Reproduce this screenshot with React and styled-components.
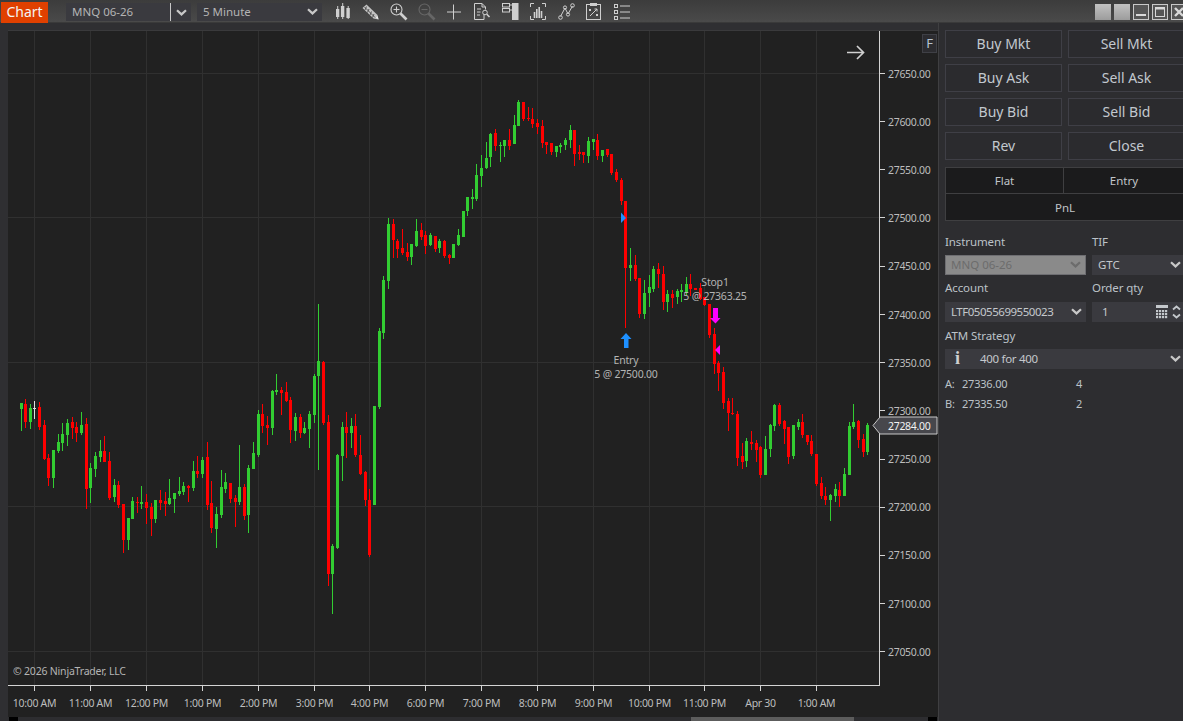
import React from "react";
import styled, { createGlobalStyle } from "styled-components";

const UI = '"Noto Sans", "Open Sans", "Liberation Sans", sans-serif';

const Global = createGlobalStyle`
  html, body { margin: 0; padding: 0; background: #2d2d30; }
  #root { width: 1183px; height: 721px; overflow: hidden; }
  * { box-sizing: border-box; }
`;

/* ---------- candle data: crops of the chart, [x, wickTop, bodyTop, bodyBottom, wickBottom, colour] at 3x ---------- */
const crops = [
  { ox: 0, oy: 390, bars: `64 39 39 57 123 g;76 27 42 96 114 r;91 42 54 96 117 g;103 33 54 57 87 w;118 36 51 111 120 r;133 90 105 207 210 r;145 192 204 264 288 r;160 180 180 264 294 g;175 132 156 184 189 g;187 99 132 159 184 g;202 87 99 135 168 g;217 81 96 114 148 r;229 96 111 129 156 r;244 66 105 129 135 g;259 84 102 297 357 r;271 219 234 294 339 g;286 186 198 237 261 g;301 150 183 201 216 g;313 138 183 216 216 r;328 186 213 324 330 r;343 267 285 321 336 g;355 273 285 345 354 r;370 342 342 450 489 r;385 384 384 450 480 g;397 321 333 387 387 g;412 321 336 339 369 r;424 288 336 342 357 g;439 312 336 354 402 r;454 339 351 387 438 r;466 330 330 387 399 g;481 300 330 339 360 r;496 306 333 342 378 r;508 267 324 342 345 g;523 309 309 327 369 g;538 261 303 312 318 g;550 276 288 306 315 g;565 285 288 294 336 r;580 213 243 294 303 g;592 198 243 252 264 r` },
  { ox: 200, oy: 300, bars: `7 471 480 522 534 g;22 426 471 615 630 r;34 543 609 684 699 r;49 621 642 687 744 g;64 510 561 645 654 g;76 519 546 567 579 g;91 549 549 597 609 r;106 585 594 606 681 r;118 435 561 606 615 g;133 552 561 648 660 r;145 495 504 645 699 g;160 426 459 507 507 g;175 330 342 465 471 g;187 312 342 378 399 r;202 348 375 384 435 r;217 270 273 384 405 g;229 222 270 276 285 g;244 261 270 279 345 r;259 246 276 303 306 r;271 291 300 390 429 r;286 339 351 393 423 g;301 342 351 399 414 r;313 366 384 399 402 g;328 333 342 387 444 g;343 222 228 345 369 g;355 12 183 228 510 g;370 183 186 369 375 r;385 345 366 822 858 r;397 732 738 822 942 g;412 462 465 744 747 g;427 366 381 468 543 g;439 336 381 399 474 r;454 354 378 399 444 g;466 342 378 465 471 r;481 405 465 522 525 r;496 513 516 600 618 r;508 567 600 765 771 r;523 318 318 615 615 g;538 84 93 321 327 g;550 -72 -60 99 117 g` },
  { ox: 380, oy: 95, bars: `25 369 387 558 582 g;40 372 387 435 489 r;52 432 438 462 489 r;67 402 459 474 480 r;82 444 471 486 498 r;94 447 447 486 510 g;109 372 408 453 456 g;124 384 405 426 435 r;136 408 420 453 477 r;151 414 420 450 453 g;166 423 423 462 471 r;178 432 438 459 474 g;193 435 438 483 489 r;208 477 480 489 507 r;220 447 447 489 489 g;235 402 420 450 453 g;250 348 348 426 426 g;262 306 306 348 363 g;277 282 306 312 342 g;289 207 240 312 318 g;304 180 219 243 276 g;319 141 189 219 222 g;331 114 117 186 216 g;346 102 114 153 168 r;361 141 150 153 201 g;373 135 135 153 186 g;388 102 135 153 165 r;403 60 90 147 147 g;415 15 21 93 93 g;430 21 21 72 78 r;445 36 69 72 78 r;457 39 72 87 99 r;472 72 84 96 117 r;487 75 93 144 159 r;499 141 141 150 177 r;514 144 144 171 180 r;529 153 153 171 186 g;541 144 150 156 174 g;556 129 135 150 165 g;571 90 105 135 159 g;583 105 105 177 213 r;598 150 171 177 195 r;610 171 171 180 204 r;625 126 138 183 204 g;640 132 132 141 165 g;652 117 135 183 195 r;667 165 165 183 201 g;682 162 162 180 186 r;694 177 177 234 240 r;709 222 231 255 261 r;724 249 255 318 330 r` },
  { ox: 580, oy: 200, bars: `136 3 3 204 384 r;151 144 195 204 243 g;166 165 195 237 243 r;178 234 234 342 354 r;193 240 279 342 357 g;208 225 261 279 321 g;220 198 207 267 276 g;235 189 207 222 264 r;250 198 222 306 330 r;262 270 282 306 336 g;277 270 282 294 324 r;292 267 273 291 312 g;304 252 270 276 306 g;319 231 252 276 285 g;331 222 252 267 288 r;346 264 264 270 270 r;361 249 264 297 300 r;373 291 291 315 318 r` },
  { ox: 690, oy: 300, bars: `58 12 12 105 114 r;73 84 102 192 222 r;85 183 189 219 273 r;100 201 216 309 327 r;115 294 303 339 393 r;127 294 339 342 345 r;142 333 342 474 498 r;157 429 468 486 507 r;169 414 423 483 501 g;184 393 426 432 450 r;199 420 429 450 486 r;211 438 441 525 534 r;226 408 447 525 525 g;241 372 375 447 471 g;253 312 315 378 393 g;268 309 315 372 378 r;283 360 363 387 432 r;295 381 381 471 492 r;310 375 375 468 477 g;325 357 366 381 390 g;337 342 366 405 414 r;352 405 405 426 435 r;364 405 423 462 468 r;379 462 462 552 558 r;394 531 549 588 597 r;406 561 588 600 615 r;421 582 585 600 663 g;436 552 567 588 606 g;448 546 570 588 621 r;463 504 522 588 588 g;478 366 378 525 525 g;490 312 366 381 387 g;505 360 363 420 444 r;520 402 417 456 471 r;532 369 375 456 465 g` },
];

const COLORS = { g: "#32cd32", r: "#ff0000", w: "#e0e0e0" };

const candles = crops.flatMap(({ ox, oy, bars }) =>
  bars.split(";").map((row) => {
    const p = row.split(" ");
    const [x, a, b, c, d] = p.slice(0, 5).map(Number);
    return {
      x: Math.floor(x / 3 + ox),
      high: Math.round(a / 3 + oy),
      top: Math.round(b / 3 + oy),
      bottom: Math.round(c / 3 + oy),
      low: Math.round(d / 3 + oy),
      color: COLORS[p[5]],
    };
  })
);

const priceLabels = [
  ["27650.00", 73.5], ["27600.00", 121.5], ["27550.00", 169.5], ["27500.00", 217.5],
  ["27450.00", 266], ["27400.00", 314.5], ["27350.00", 362.5], ["27300.00", 410.5],
  ["27250.00", 459], ["27200.00", 507], ["27150.00", 555], ["27100.00", 603.5], ["27050.00", 651.5],
];
const gridY = [73, 217, 362, 506, 651];
const timeLabels = [
  ["10:00 AM", 34], ["11:00 AM", 90], ["12:00 PM", 146], ["1:00 PM", 202], ["2:00 PM", 258],
  ["3:00 PM", 314], ["4:00 PM", 369], ["6:00 PM", 425], ["7:00 PM", 481], ["8:00 PM", 537],
  ["9:00 PM", 593], ["10:00 PM", 649], ["11:00 PM", 704], ["Apr 30", 760], ["1:00 AM", 816],
];

/* ---------- shell ---------- */
const Page = styled.div`
  width: 1183px;
  height: 721px;
  display: flex;
  flex-direction: column;
  overflow: hidden;
  background: #2d2d30;
  font-family: ${UI};
`;

const TitleBar = styled.header`
  height: 23px;
  flex: none;
  display: flex;
  align-items: flex-start;
  padding: 2px 0 0 1px;
  background: linear-gradient(#3c3c3c, #4a4a4a);
  border-bottom: 1px solid #3a3a3a;
`;

const ChartTab = styled.div`
  width: 47px;
  height: 21px;
  background: #e04000;
  color: #f4f4f4;
  font-size: 14px;
  line-height: 20px;
  text-align: center;
`;

const InstrumentBox = styled.div`
  width: 125px;
  height: 18px;
  margin: 1px 0 0 18px;
  display: flex;
  background: #3a3a3f;
  color: #b4b4b4;
  font-size: 11.5px;
  line-height: 17px;
`;

const InstrumentName = styled.span`
  width: 105px;
  padding-left: 6px;
  border-right: 1px solid #c8c8c8;
`;

const BoxChevron = styled.span`
  flex: 1;
  display: flex;
  align-items: center;
  justify-content: center;
`;

const IntervalBox = styled.div`
  width: 125px;
  height: 18px;
  margin: 1px 0 0 6px;
  padding: 0 4px 1px 6px;
  display: flex;
  align-items: center;
  justify-content: space-between;
  background: #3a3a3f;
  color: #b4b4b4;
  font-size: 11.5px;
`;

const IconRow = styled.div`
  display: flex;
  margin-left: 7px;
  margin-top: -2px;
`;

const ToolIcon = styled.span`
  width: 27.9px;
  height: 23px;
  display: flex;
  align-items: center;
  justify-content: center;
  color: ${(p) => (p.$dim ? "#666" : "#cfcfcf")};
`;

const WindowControls = styled.div`
  margin: 2px -4px 0 auto;
  display: flex;
  gap: 3px;
`;

const GhostControl = styled.span`
  width: 16px;
  height: 16px;
  background: linear-gradient(#c2c2c2, #9c9c9c);
`;

const WindowControl = styled.span`
  width: 16px;
  height: 16px;
  border: 1px solid #c8c8c8;
  background: #555;
  display: flex;
  align-items: center;
  justify-content: center;
  color: #d8d8d8;
`;

const Body = styled.main`
  flex: 1;
  display: flex;
  min-height: 0;
`;

/* ---------- chart ---------- */
const ChartColumn = styled.section`
  width: 938px;
  flex: none;
  padding: 7px 0 0 8px;
  display: flex;
  flex-direction: column;
  background: #2f2f32;
`;

const ChartFrame = styled.div`
  position: relative;
  width: 930px;
  height: 687px;
  background: #212121;
  border-top: 1px solid #3a3a3c;
`;

const ChartSvg = styled.svg`
  display: block;
  font-family: ${UI};
  font-size: 10.5px;
  letter-spacing: -0.3px;
  rect { shape-rendering: crispEdges; }
`;

const AxisText = styled.text`
  fill: #bdbdbd;
`;

const PlotNote = styled.text`
  fill: #b4b4b4;
  letter-spacing: -0.2px;
`;

const FlagButton = styled.div`
  position: absolute;
  top: 3px;
  right: 1px;
  width: 15px;
  height: 19px;
  border: 1px solid #3f4046;
  background: #2c2c30;
  color: #b8c4d0;
  font-size: 13px;
  line-height: 16px;
  text-align: center;
`;

const ScrollBar = styled.div`
  height: 4px;
  flex: none;
  display: flex;
  padding-left: 1px;
  background: #2d2d30;
`;

const ScrollCap = styled.span`
  width: 9px;
  background: #000;
  margin-left: ${(p) => p.$left || 0}px;
`;

const ScrollThumb = styled.span`
  width: 163px;
  margin-left: 673px;
  background: #5c5c5c;
`;

/* ---------- order panel ---------- */
const TradePanel = styled.aside`
  width: 247px;
  flex: none;
  padding: 7px 0 0 6px;
  background: #2d2d30;
  border-left: 1px solid #3f3f41;
`;

const ButtonGrid = styled.div`
  display: grid;
  grid-template-columns: 117px 117px;
  grid-auto-rows: 28px;
  gap: 6px;
`;

const OrderButton = styled.button`
  padding: 0 0 2px;
  border: 1px solid #3f3f46;
  background: #2b2b2e;
  color: #c2c8ce;
  font-family: inherit;
  font-size: 14px;
`;

const PositionTable = styled.div`
  margin-top: 7px;
  width: 240px;
  display: grid;
  grid-template-columns: 118px 120px;
  grid-auto-rows: 26px;
  background: #1b1b1c;
  border: 1px solid #3f3f41;
`;

const PositionCell = styled.div`
  display: flex;
  align-items: center;
  justify-content: center;
  color: #c0c4c8;
  font-size: 11.5px;
  grid-column: ${(p) => (p.$wide ? "1 / 3" : "auto")};
  border-right: ${(p) => (p.$split ? "1px solid #3f3f41" : "none")};
  border-bottom: ${(p) => (p.$split !== undefined ? "1px solid #3f3f41" : "none")};
`;

const FormGrid = styled.div`
  display: grid;
  grid-template-columns: 141px 93px;
  column-gap: 6px;
  padding-top: 8px;
`;

const FieldLabel = styled.label`
  display: block;
  height: 14px;
  line-height: 14px;
  margin: ${(p) => p.$top ?? 6}px 0 ${(p) => p.$bottom ?? 6}px;
  color: #bcc2c8;
  font-size: 11.5px;
  letter-spacing: -0.1px;
  grid-column: ${(p) => (p.$wide ? "1 / 3" : "auto")};
`;

const Select = styled.div`
  height: 20px;
  padding: 0 4px 1px ${(p) => (p.$disabled ? 5 : 6)}px;
  display: flex;
  align-items: center;
  justify-content: space-between;
  grid-column: ${(p) => (p.$wide ? "1 / 3" : "auto")};
  background: ${(p) => (p.$disabled ? "#8a8a8a" : "#3a3a3f")};
  border: ${(p) => (p.$disabled ? "1px solid #6e6e72" : "none")};
  color: ${(p) => (p.$disabled ? "#6c6c6c" : "#c4c8cc")};
  font-size: 11.5px;
`;

const AccountName = styled.span`
  letter-spacing: -0.47px;
`;

const QtyValue = styled.span`
  padding-left: 4px;
`;

const QtyTools = styled.span`
  display: flex;
  align-items: center;
  gap: 4px;
`;

const InfoGlyph = styled.span`
  width: 29px;
  padding-left: 4px;
  color: #d0d0d0;
  font-family: "Liberation Serif", serif;
  font-weight: 700;
  font-size: 18px;
`;

const StrategyName = styled.span`
  flex: 1;
  letter-spacing: -0.3px;
`;

const Quotes = styled.div`
  padding-top: 4px;
`;

const QuoteRow = styled.div`
  height: 20px;
  display: flex;
  align-items: center;
  color: #bcc2c8;
  font-size: 11px;
  letter-spacing: -0.2px;
`;

const QuoteSide = styled.span`
  width: 17px;
`;

const QuotePrice = styled.span`
  width: 114px;
`;

/* ---------- drawings ---------- */
const Chevron = ({ color = "#c8c8c8" }) => (
  <svg width="11" height="7" viewBox="0 0 11 7" fill="none">
    <path d="M1 1.2 L5.5 5.4 L10 1.2" stroke={color} strokeWidth="2.2" />
  </svg>
);

const CandlesIcon = () => (
  <svg width="14" height="17" viewBox="0 0 14 17" fill="currentColor">
    <rect x="1.2" y="3" width="1" height="13" /><rect x="0" y="6" width="3.3" height="8" />
    <rect x="6.2" y="0" width="1" height="16" /><rect x="4.9" y="3" width="3.4" height="11" />
    <rect x="11.7" y="3" width="1" height="13" /><rect x="10.4" y="5" width="3.4" height="10" />
  </svg>
);
const PencilIcon = () => (
  <svg width="17" height="16" viewBox="0 0 17 16">
    <path d="M0.5 4 L4.5 0.5 L15.5 11 L16.5 15.5 L11.5 14.5 Z" fill="#c4c4c4" />
    <path d="M4.5 2.5 L3 6 M7 5 L5.5 8.5 M9.5 7.5 L8 11 M12 10 L10.5 13.5 M2.5 3 L13 13.5" stroke="#4a4a4a" strokeWidth="0.9" fill="none" />
    <path d="M13.8 13.2 L16.5 15.5 L15.7 12.2 Z" fill="#efefef" />
  </svg>
);
const ZoomIcon = ({ minus, color }) => (
  <svg width="18" height="18" viewBox="0 0 18 18" fill="none" stroke={color}>
    <circle cx="6.5" cy="6.5" r="5.5" strokeWidth="1.1" />
    <path d="M3.5 6.5 H9.5" strokeWidth="1.1" />
    {!minus && <path d="M6.5 3.5 V9.5" strokeWidth="1.1" />}
    <path d="M10.5 10.5 L16.5 16.5" strokeWidth="2.6" />
  </svg>
);
const CrossIcon = () => (
  <svg width="16" height="16" viewBox="0 0 16 16" stroke="currentColor">
    <path d="M6.5 0.5 V15.5 M-1 8 H14" strokeWidth="1" />
  </svg>
);
const DocSearchIcon = () => (
  <svg width="17" height="17" viewBox="0 0 17 17" fill="none" stroke="currentColor">
    <path d="M10 11.5 V16.5 H0.5 V0.5 H8 L11.5 4 V6.5 M8 0.5 V4 H11.5" />
    <path d="M3 6 H7 M3 9 H6.5 M3 12 H6" />
    <circle cx="11" cy="9.5" r="2.3" />
    <path d="M12.8 11.3 L15.5 14" strokeWidth="1.6" />
  </svg>
);
const PanelsIcon = () => (
  <svg width="17" height="17" viewBox="0 0 17 17" fill="none" stroke="currentColor">
    <rect x="0.5" y="0.5" width="7" height="3.5" />
    <rect x="0.5" y="5.5" width="7" height="3.5" />
    <path d="M7.5 2 H10 M7.5 7 H10" />
    <rect x="10" y="0" width="6.5" height="17" fill="currentColor" stroke="none" />
  </svg>
);
const BracketBarsIcon = () => (
  <svg width="16" height="17" viewBox="0 0 16 17" fill="none" stroke="currentColor">
    <path d="M4 0.5 H0.5 V4 M12 0.5 H15.5 V4 M0.5 13 V16.5 H4 M15.5 13 V16.5 H12" />
    <path d="M4.5 15 V9 M6.8 15 V6 M9.2 15 V4 M11.5 15 V8" strokeWidth="1.6" />
  </svg>
);
const LinesIcon = () => (
  <svg width="17" height="17" viewBox="0 0 17 17" fill="none" stroke="currentColor">
    <path d="M2.5 13.5 L7 5 L10 11 L14.5 3" />
    <circle cx="2.5" cy="14.5" r="1.8" /><circle cx="7" cy="4.5" r="1.6" />
    <circle cx="10" cy="11.5" r="1.6" /><circle cx="14.5" cy="2.5" r="1.8" />
  </svg>
);
const ClipboardIcon = () => (
  <svg width="15" height="17" viewBox="0 0 15 17" fill="none" stroke="currentColor">
    <rect x="0.5" y="1.5" width="14" height="15" />
    <rect x="4" y="0" width="7" height="3" fill="currentColor" stroke="none" />
    <path d="M3 6 L5 8 M5 6 L3 8 M10 11 L12 13 M12 11 L10 13 M4 13 L11 6 M8.5 6 H11 V8.5" />
  </svg>
);
const ListIcon = () => (
  <svg width="16" height="16" viewBox="0 0 16 16" fill="none" stroke="currentColor">
    <rect x="0.5" y="0.5" width="3" height="3" /><rect x="0.5" y="6.5" width="3" height="3" /><rect x="0.5" y="12.5" width="3" height="3" />
    <path d="M6 2 H16 M6 8 H16 M6 14 H16" />
  </svg>
);
const CalculatorIcon = () => (
  <svg width="12" height="14" viewBox="0 0 12 14" fill="#c4c8cc">
    <rect x="0" y="0" width="12" height="3" />
    {[5, 8, 11].flatMap((y) => [0, 3, 6, 9].map((x) => <rect key={`${x}-${y}`} x={x} y={y} width="2.2" height="2.2" />))}
  </svg>
);
const StepperIcon = () => (
  <svg width="9" height="14" viewBox="0 0 9 14" fill="none" stroke="#c4c8cc" strokeWidth="1.8">
    <path d="M1 4.5 L4.5 1.5 L8 4.5 M1 9.5 L4.5 12.5 L8 9.5" />
  </svg>
);

const Chart = () => (
  <ChartSvg width="930" height="686" viewBox="8 31 930 686">
    {timeLabels.map(([, x]) => <rect key={x} x={x} y="31" width="1" height="654" fill="#303030" />)}
    {gridY.map((y) => <rect key={y} x="8" y={y} width="871" height="1" fill="#303030" />)}

    {candles.map((c, i) => (
      <g key={i} fill={c.color}>
        <rect x={c.x} y={c.high} width="1" height={Math.max(c.low - c.high, 1)} />
        <rect x={c.x - 1} y={c.top} width="3" height={Math.max(c.bottom - c.top, 1)} />
      </g>
    ))}

    {/* axes */}
    <rect x="879" y="31" width="1" height="655" fill="#d4d4d4" />
    <rect x="8" y="685" width="872" height="1" fill="#d4d4d4" />
    {priceLabels.map(([text, y]) => (
      <g key={text}>
        <rect x="880" y={Math.floor(y)} width="5" height="1" fill="#d4d4d4" />
        <AxisText x="888" y={y + 4}>{text}</AxisText>
      </g>
    ))}
    {timeLabels.map(([text, x]) => (
      <g key={text}>
        <rect x={x} y="686" width="1" height="5" fill="#d4d4d4" />
        <AxisText x={x + 0.5} y="707" textAnchor="middle">{text}</AxisText>
      </g>
    ))}

    {/* chart arrow */}
    <path d="M847 52.5 H863.5 M857 46 L863.5 52.5 L857 59" fill="none" stroke="#d0d0d0" strokeWidth="1.7" />

    {/* execution markers */}
    <path d="M626 333 L631.5 339 H628.5 V348 H624 V339 H620.5 Z" fill="#1e90ff" />
    <path d="M621 212.5 L626 218 L621 223 Z" fill="#1e90ff" />
    <path d="M713 308 H718 V318 H720.5 L715.5 323.5 L710 318 H713 Z" fill="#ff00ff" />
    <path d="M720 345 V355 L715 350 Z" fill="#ff00ff" />

    <PlotNote x="626" y="364" textAnchor="middle">Entry</PlotNote>
    <PlotNote x="626" y="378" textAnchor="middle">5 @ 27500.00</PlotNote>
    <PlotNote x="715" y="286" textAnchor="middle">Stop1</PlotNote>
    <PlotNote x="715" y="300" textAnchor="middle">5 @ 27363.25</PlotNote>
    <PlotNote x="13" y="675">© 2026 NinjaTrader, LLC</PlotNote>

    {/* last price marker */}
    <path d="M873 425.5 L880 417 H937 V434 H880 Z" fill="#47474c" stroke="#c8c8c8" strokeWidth="1" />
    <text x="888" y="429.5" fill="#f2f2f2">27284.00</text>
  </ChartSvg>
);

export default function App() {
  return (
    <Page>
      <Global />
      <TitleBar>
        <ChartTab>Chart</ChartTab>
        <InstrumentBox>
          <InstrumentName>MNQ 06-26</InstrumentName>
          <BoxChevron><Chevron /></BoxChevron>
        </InstrumentBox>
        <IntervalBox>
          <span>5 Minute</span>
          <Chevron />
        </IntervalBox>
        <IconRow>
          <ToolIcon><CandlesIcon /></ToolIcon>
          <ToolIcon><PencilIcon /></ToolIcon>
          <ToolIcon><ZoomIcon color="#cfcfcf" /></ToolIcon>
          <ToolIcon $dim><ZoomIcon minus color="#666" /></ToolIcon>
          <ToolIcon><CrossIcon /></ToolIcon>
          <ToolIcon><DocSearchIcon /></ToolIcon>
          <ToolIcon><PanelsIcon /></ToolIcon>
          <ToolIcon><BracketBarsIcon /></ToolIcon>
          <ToolIcon><LinesIcon /></ToolIcon>
          <ToolIcon><ClipboardIcon /></ToolIcon>
          <ToolIcon><ListIcon /></ToolIcon>
        </IconRow>
        <WindowControls>
          <GhostControl />
          <GhostControl />
          <WindowControl>
            <svg width="10" height="10" viewBox="0 0 10 10"><rect x="0" y="7" width="10" height="2" fill="currentColor" /></svg>
          </WindowControl>
          <WindowControl>
            <svg width="10" height="10" viewBox="0 0 10 10" fill="none" stroke="currentColor"><rect x="0.5" y="0.5" width="9" height="9" /><path d="M0 1.5 H10" strokeWidth="2" /></svg>
          </WindowControl>
          <WindowControl>
            <svg width="10" height="10" viewBox="0 0 10 10" stroke="currentColor" strokeWidth="2.4"><path d="M1 1 L9 9 M9 1 L1 9" /></svg>
          </WindowControl>
        </WindowControls>
      </TitleBar>
      <Body>
        <ChartColumn>
          <ChartFrame>
            <Chart />
            <FlagButton>F</FlagButton>
          </ChartFrame>
          <ScrollBar>
            <ScrollCap />
            <ScrollThumb />
            <ScrollCap $left={74} />
          </ScrollBar>
        </ChartColumn>
        <TradePanel>
          <ButtonGrid>
            {["Buy Mkt", "Sell Mkt", "Buy Ask", "Sell Ask", "Buy Bid", "Sell Bid", "Rev", "Close"].map((t) => (
              <OrderButton key={t}>{t}</OrderButton>
            ))}
          </ButtonGrid>
          <PositionTable>
            <PositionCell $split>Flat</PositionCell>
            <PositionCell $split={false}>Entry</PositionCell>
            <PositionCell $wide>PnL</PositionCell>
          </PositionTable>
          <FormGrid>
            <FieldLabel>Instrument</FieldLabel>
            <FieldLabel>TIF</FieldLabel>
            <Select $disabled>MNQ 06-26<Chevron color="#6c6c6c" /></Select>
            <Select>GTC<Chevron /></Select>
            <FieldLabel $bottom={7}>Account</FieldLabel>
            <FieldLabel $bottom={7}>Order qty</FieldLabel>
            <Select><AccountName>LTF05055699550023</AccountName><Chevron /></Select>
            <Select>
              <QtyValue>1</QtyValue>
              <QtyTools><CalculatorIcon /><StepperIcon /></QtyTools>
            </Select>
            <FieldLabel $top={7} $wide>ATM Strategy</FieldLabel>
            <Select $wide>
              <InfoGlyph>i</InfoGlyph>
              <StrategyName>400 for 400</StrategyName>
              <Chevron />
            </Select>
          </FormGrid>
          <Quotes>
            <QuoteRow><QuoteSide>A:</QuoteSide><QuotePrice>27336.00</QuotePrice><span>4</span></QuoteRow>
            <QuoteRow><QuoteSide>B:</QuoteSide><QuotePrice>27335.50</QuotePrice><span>2</span></QuoteRow>
          </Quotes>
        </TradePanel>
      </Body>
    </Page>
  );
}
